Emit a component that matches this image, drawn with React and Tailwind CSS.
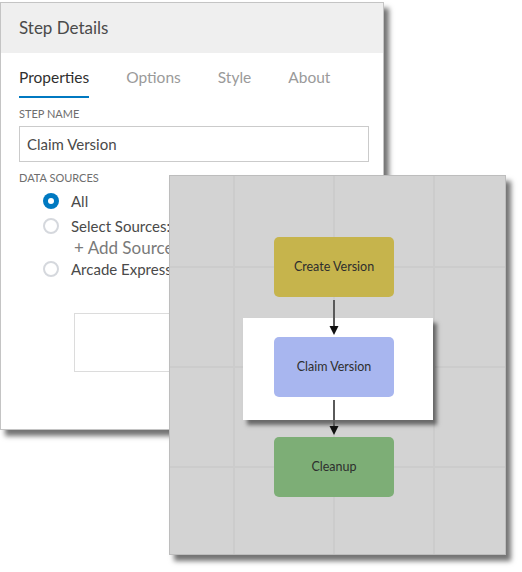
import React from "react"

const font = "font-['Lato','Noto_Sans',sans-serif]"

const Radio = ({ checked }) =>
  checked ? (
    <span className="w-4 h-4 rounded-full bg-[#0079c1] flex items-center justify-center shrink-0">
      <span className="w-[6px] h-[6px] rounded-full bg-white" />
    </span>
  ) : (
    <span className="w-4 h-4 rounded-full border-2 border-[#d5d8dd] bg-white shrink-0" />
  )

const StepDetails = () => {
  const tabs = ["Properties", "Options", "Style", "About"]
  return (
    <div className="absolute left-0 top-[2px] w-[384px] h-[428px] bg-white border border-[#c4c4c4] shadow-[5px_6px_5px_rgba(0,0,0,0.55)] overflow-hidden">
      {/* header */}
      <div className="h-[50px] bg-[#efefef] px-[18px] flex items-center text-[17px] text-[#4a4a4a]">
        Step Details
      </div>

      <div className="px-[18px]">
        {/* tabs */}
        <div className="flex gap-[37px] pt-[14px] text-[15.5px] leading-5">
          {tabs.map((t, i) => (
            <div
              key={t}
              className={
                i === 0
                  ? "pb-[9px] border-b-2 border-[#0079c1] text-[#2f2f2f]"
                  : "pb-[9px] border-b-2 border-transparent text-[#9a9a9a]"
              }
            >
              {t}
            </div>
          ))}
        </div>

        <div className="mt-[9px] text-[11px] leading-[14px] text-[#6e6e6e] uppercase">Step Name</div>
        <div className="mt-[5px] h-9 w-[350px] border border-[#cbcbcb] flex items-center px-[7px] text-[15px] text-[#4a4a4a]">
          Claim Version
        </div>

        <div className="mt-[9px] text-[11px] leading-[14px] text-[#6e6e6e] uppercase">Data Sources</div>

        <div className="pl-[24px] mt-[4px] text-[15px] text-[#4a4a4a]">
          <div className="h-6 flex items-center gap-3">
            <Radio checked />
            <span>All</span>
          </div>
          <div className="h-6 mt-[1px] flex items-center gap-3">
            <Radio />
            <span className="whitespace-nowrap">Select Sources:</span>
          </div>
          <div className="h-5 pl-[31px] flex items-center text-[17px] text-[#7a7a7a] whitespace-nowrap">
            + Add Source
          </div>
          <div className="h-[22px] flex items-center gap-3">
            <Radio />
            <span className="whitespace-nowrap">Arcade Expression</span>
          </div>
        </div>

        <div className="ml-[55px] mt-[33px] h-[59px] w-[200px] border border-[#dcdcdc]" />
      </div>
    </div>
  )
}

const Node = ({ top, color, label }) => (
  <div
    className={`absolute left-[104px] w-[120px] h-[60px] rounded-[5px] flex items-center justify-center text-[12.5px] text-[#2e2e2e] ${color}`}
    style={{ top }}
  >
    {label}
  </div>
)

const Arrow = ({ top }) => (
  <svg className="absolute left-[158px]" style={{ top }} width="12" height="36" viewBox="0 0 12 36">
    <line x1="6" y1="0" x2="6" y2="27" stroke="#5a5a5a" strokeWidth="2" />
    <polygon points="1.5,26 10.5,26 6,35" fill="#111" />
  </svg>
)

const Canvas = () => (
  <div className="absolute left-[169px] top-[175px] w-[337px] h-[380px] bg-[#d3d3d3] border border-[#bdbdbd] shadow-[5px_6px_5px_rgba(0,0,0,0.55)] overflow-hidden bg-[linear-gradient(to_right,#cccccc_2px,transparent_2px),linear-gradient(to_bottom,#cccccc_2px,transparent_2px)] bg-[length:100px_100px] bg-[position:63px_90px]">
    {/* selection highlight */}
    <div className="absolute left-[73px] top-[142px] w-[190px] h-[102px] bg-white shadow-[4px_5px_4px_rgba(0,0,0,0.5)]" />

    <Node top={61} color="bg-[#c6b44c]" label="Create Version" />
    <Node top={161} color="bg-[#a8b6ef]" label="Claim Version" />
    <Node top={261} color="bg-[#7dae76]" label="Cleanup" />

    <Arrow top={124} />
    <Arrow top={224} />
  </div>
)

export default function App() {
  return (
    <div className={`relative w-[522px] h-[572px] bg-white ${font}`}>
      <StepDetails />
      <Canvas />
    </div>
  )
}
